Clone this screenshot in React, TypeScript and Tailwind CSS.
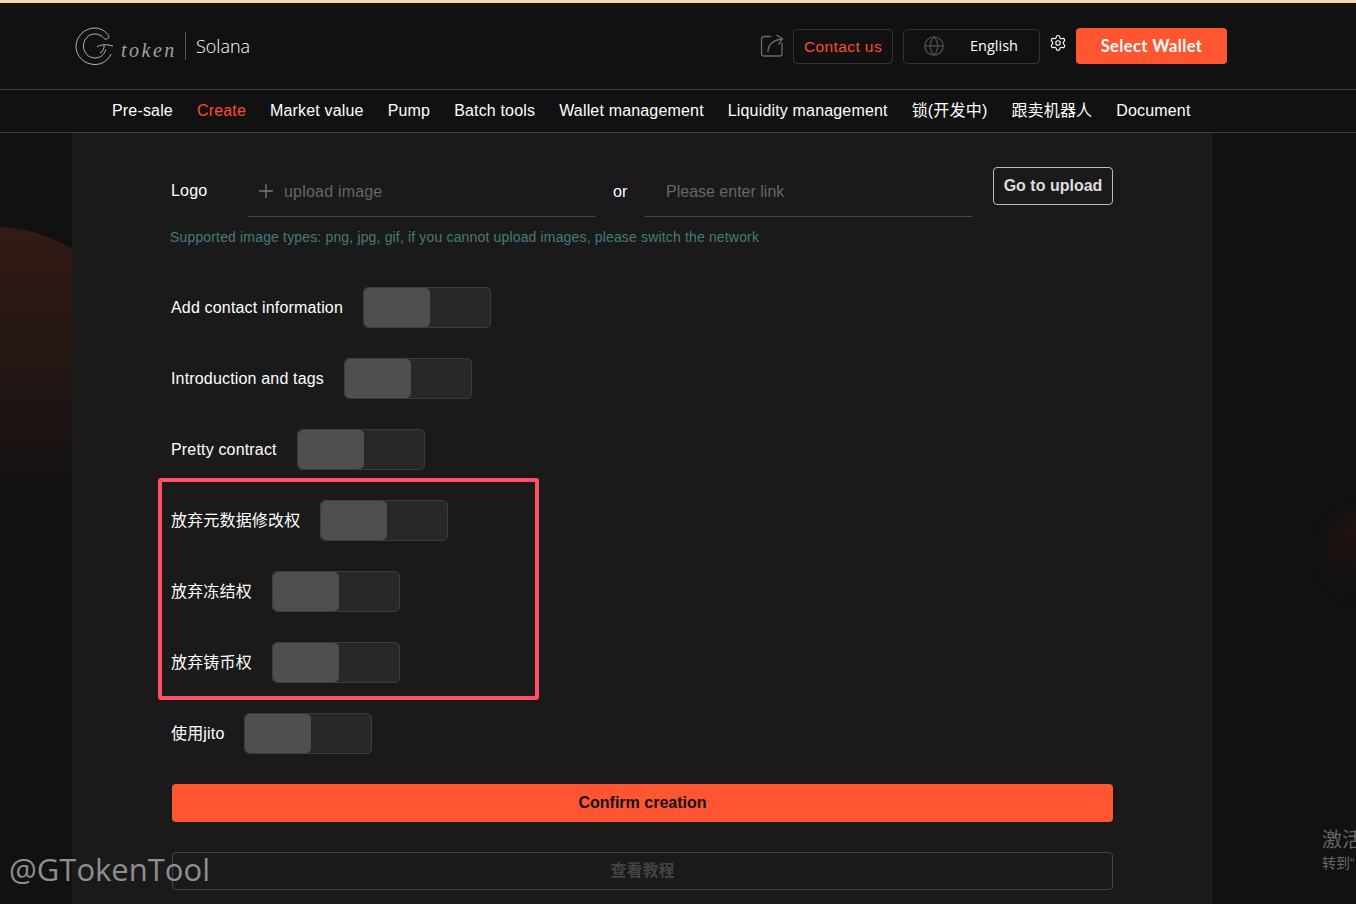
import { Globe, Plus, Settings } from 'lucide-react';

const navItems = [
  'Pre-sale',
  'Create',
  'Market value',
  'Pump',
  'Batch tools',
  'Wallet management',
  'Liquidity management',
  '锁(开发中)',
  '跟卖机器人',
  'Document',
];

function Toggle() {
  return (
    <div className="h-[41px] w-[128px] rounded-[5px] border border-[#3d3d3d] bg-[#282828]">
      <div className="h-full w-[66px] rounded-[5px] bg-[#4f4f4f]" />
    </div>
  );
}

function ToggleRow({ label }: { label: string }) {
  return (
    <div className="-ml-[1px] flex h-[41px] items-center gap-5">
      <span className="min-w-0 text-[16px] tracking-[0.17px] text-white">{label}</span>
      <Toggle />
    </div>
  );
}

function Logo() {
  return (
    <div className="flex items-center">
      <svg width="44" height="40" viewBox="0 0 44 40" fill="none" stroke="#b5b5b5" strokeWidth="1" className="mt-[2px]">
        <path d="M34 9.500C31 4 25.500 1 20 1C9.500 1 1 9.500 1 19.500C1 29.500 9.500 37.500 20 37.500C27.500 37.500 33.500 33 36 27" />
        <path d="M29 11.500C26.500 8.500 23.500 7 20 7C13 7 8.500 12.500 8.500 19C8.500 25.500 13.500 31 20 31C25 31 29 28 31 22.500" />
        <path d="M29 11.500C31 13 34 11.500 34 9.500" />
        <path d="M22 20C25 17.500 31 17 38 19M29 18C29.500 21 28 25 25 26" />
      </svg>
      <span className="ml-[2px] mt-2 w-[54px] font-['Liberation_Serif',serif] text-[20px] italic leading-none tracking-[2.500px] text-[#a0a0a0]">
        token
      </span>
      <div className="ml-[10px] h-[28px] w-px bg-[#555]" />
      <span className="ml-[10px] font-['Open_Sans',sans-serif] text-[18px] font-light text-white">Solana</span>
    </div>
  );
}

export default function App() {
  return (
    <div className="relative h-[904px] overflow-hidden bg-[#111111] font-['Liberation_Sans',Arial,'Noto_Sans_CJK_SC',sans-serif]">
      {/* background glows */}
      <div className="absolute -left-[150px] top-[227px] h-[290px] w-[290px] rounded-full bg-gradient-to-b from-[#331a15] to-[#111111]" />
      <div className="absolute left-[1322px] top-[510px] h-[86px] w-[86px] rounded-full bg-gradient-to-b from-[#221311] to-[#111111] blur-[6px]" />

      <div className="relative">
        <div className="h-[3px] bg-[#f8d7ae]" />

        <header className="flex h-[86px] items-center justify-between pl-[75px] pr-[129px]">
          <Logo />
          <div className="flex items-center">
            <svg width="24" height="24" viewBox="0 0 24 24" fill="none" stroke="#6b6b6b" strokeWidth="1.300" className="mr-[9px] mb-[1px]">
              <path d="M11 2.500H4a2.500 2.500 0 0 0-2.500 2.500v14.500A2.500 2.500 0 0 0 4 22h16a2 2 0 0 0 2-2V9" />
              <path d="M8 18C8 11 12 6.500 21.500 5M16.500 1L22.500 5L18.500 10.500" />
            </svg>
            <div className="flex h-[35px] w-[100px] items-center justify-center rounded-[4px] border border-[#333] pt-[2px] text-[15.500px] tracking-[0.4px] text-[#ff4b2b]">
              Contact us
            </div>
            <div className="ml-[10px] flex h-[35px] w-[137px] items-center rounded-[4px] border border-[#333] pl-[19px] text-white">
              <Globe size={22} strokeWidth={1.500} className="text-[#4a4a4a]" />
              <span className="ml-[25px] font-['Open_Sans',sans-serif] text-[14.500px]">English</span>
            </div>
            <Settings size={18} strokeWidth={1.500} className="mb-[6px] ml-[9px] text-white" />
            <div className="ml-[9px] flex h-[36px] w-[151px] items-center justify-center rounded-[4px] bg-[#ff5530] font-['Lato',sans-serif] text-[16.500px] font-bold tracking-[0.400px] text-white">
              Select Wallet
            </div>
          </div>
        </header>

        <nav className="flex h-[44px] items-center gap-6 border-y border-[#3f3f3f] pl-[112px] text-[16px] tracking-[0.17px] text-white">
          {navItems.map((item) => (
            <span key={item} className={item === 'Create' ? 'text-[#ff4b2b]' : ''}>
              {item}
            </span>
          ))}
        </nav>

        <main className="ml-[72px] h-[772px] w-[1141px] bg-[#1a1a1a] pl-[100px] pr-[100px] pt-[34px]">
          <div className="flex h-[50px] items-start">
            <span className="-ml-[1px] w-[77px] pt-[12px] text-[16px] tracking-[0.2px] text-white">Logo</span>
            <div className="flex h-[50px] w-[347px] items-start gap-[4px] border-b border-[#444] pl-[7px] pt-[13px] text-[16px] tracking-[0.2px] text-[#666]">
              <Plus size={22} strokeWidth={1.500} className="text-[#777]" />
              <span className="ml-[3px]">upload image</span>
            </div>
            <span className="ml-[18px] w-[32px] pt-[13px] text-[16px] text-white">or</span>
            <div className="h-[50px] w-[328px] border-b border-[#444] pl-[21px] pt-[13px] text-[16px] text-[#666]">
              Please enter link
            </div>
            <div className="ml-[20px] flex h-[38px] w-[120px] items-center justify-center rounded-[4px] border border-[#bbb] text-[16px] font-bold text-[#ddd]">
              Go to upload
            </div>
          </div>
          <p className="-ml-[2px] mt-[11px] text-[14px] leading-[18px] tracking-[0.160px] text-[#477a7a]">
            Supported image types: png, jpg, gif, if you cannot upload images, please switch the network
          </p>

          <div className="mt-[41px] flex flex-col gap-[30px]">
            <ToggleRow label="Add contact information" />
            <ToggleRow label="Introduction and tags" />
            <ToggleRow label="Pretty contract" />
            <ToggleRow label="放弃元数据修改权" />
            <ToggleRow label="放弃冻结权" />
            <ToggleRow label="放弃铸币权" />
            <ToggleRow label="使用jito" />
          </div>

          <div className="mt-[30px] flex h-[38px] items-center justify-center rounded-[4px] bg-[#ff5530] text-[16px] font-bold text-[#111]">
            Confirm creation
          </div>
          <div className="mt-[30px] flex h-[38px] items-center justify-center rounded-[4px] border border-[#444] text-[16px] font-bold text-[#444]">
            查看教程
          </div>
        </main>
      </div>

      {/* annotation box around the three revoke rows */}
      <div className="absolute left-[158px] top-[478px] h-[222px] w-[381px] rounded-[3px] border-[4px] border-[#ff5064]" />

      {/* screen recording watermark and windows activation text */}
      <span className="absolute left-[9px] top-[846px] font-['Open_Sans',sans-serif] text-[31px] text-[#8e8e8e]">
        @GTokenTool
      </span>
      <span className="absolute left-[1322px] top-[825px] whitespace-nowrap text-[20px] text-[#666]">激活</span>
      <span className="absolute left-[1322px] top-[853px] whitespace-nowrap text-[14px] text-[#666]">转到“</span>
    </div>
  );
}
